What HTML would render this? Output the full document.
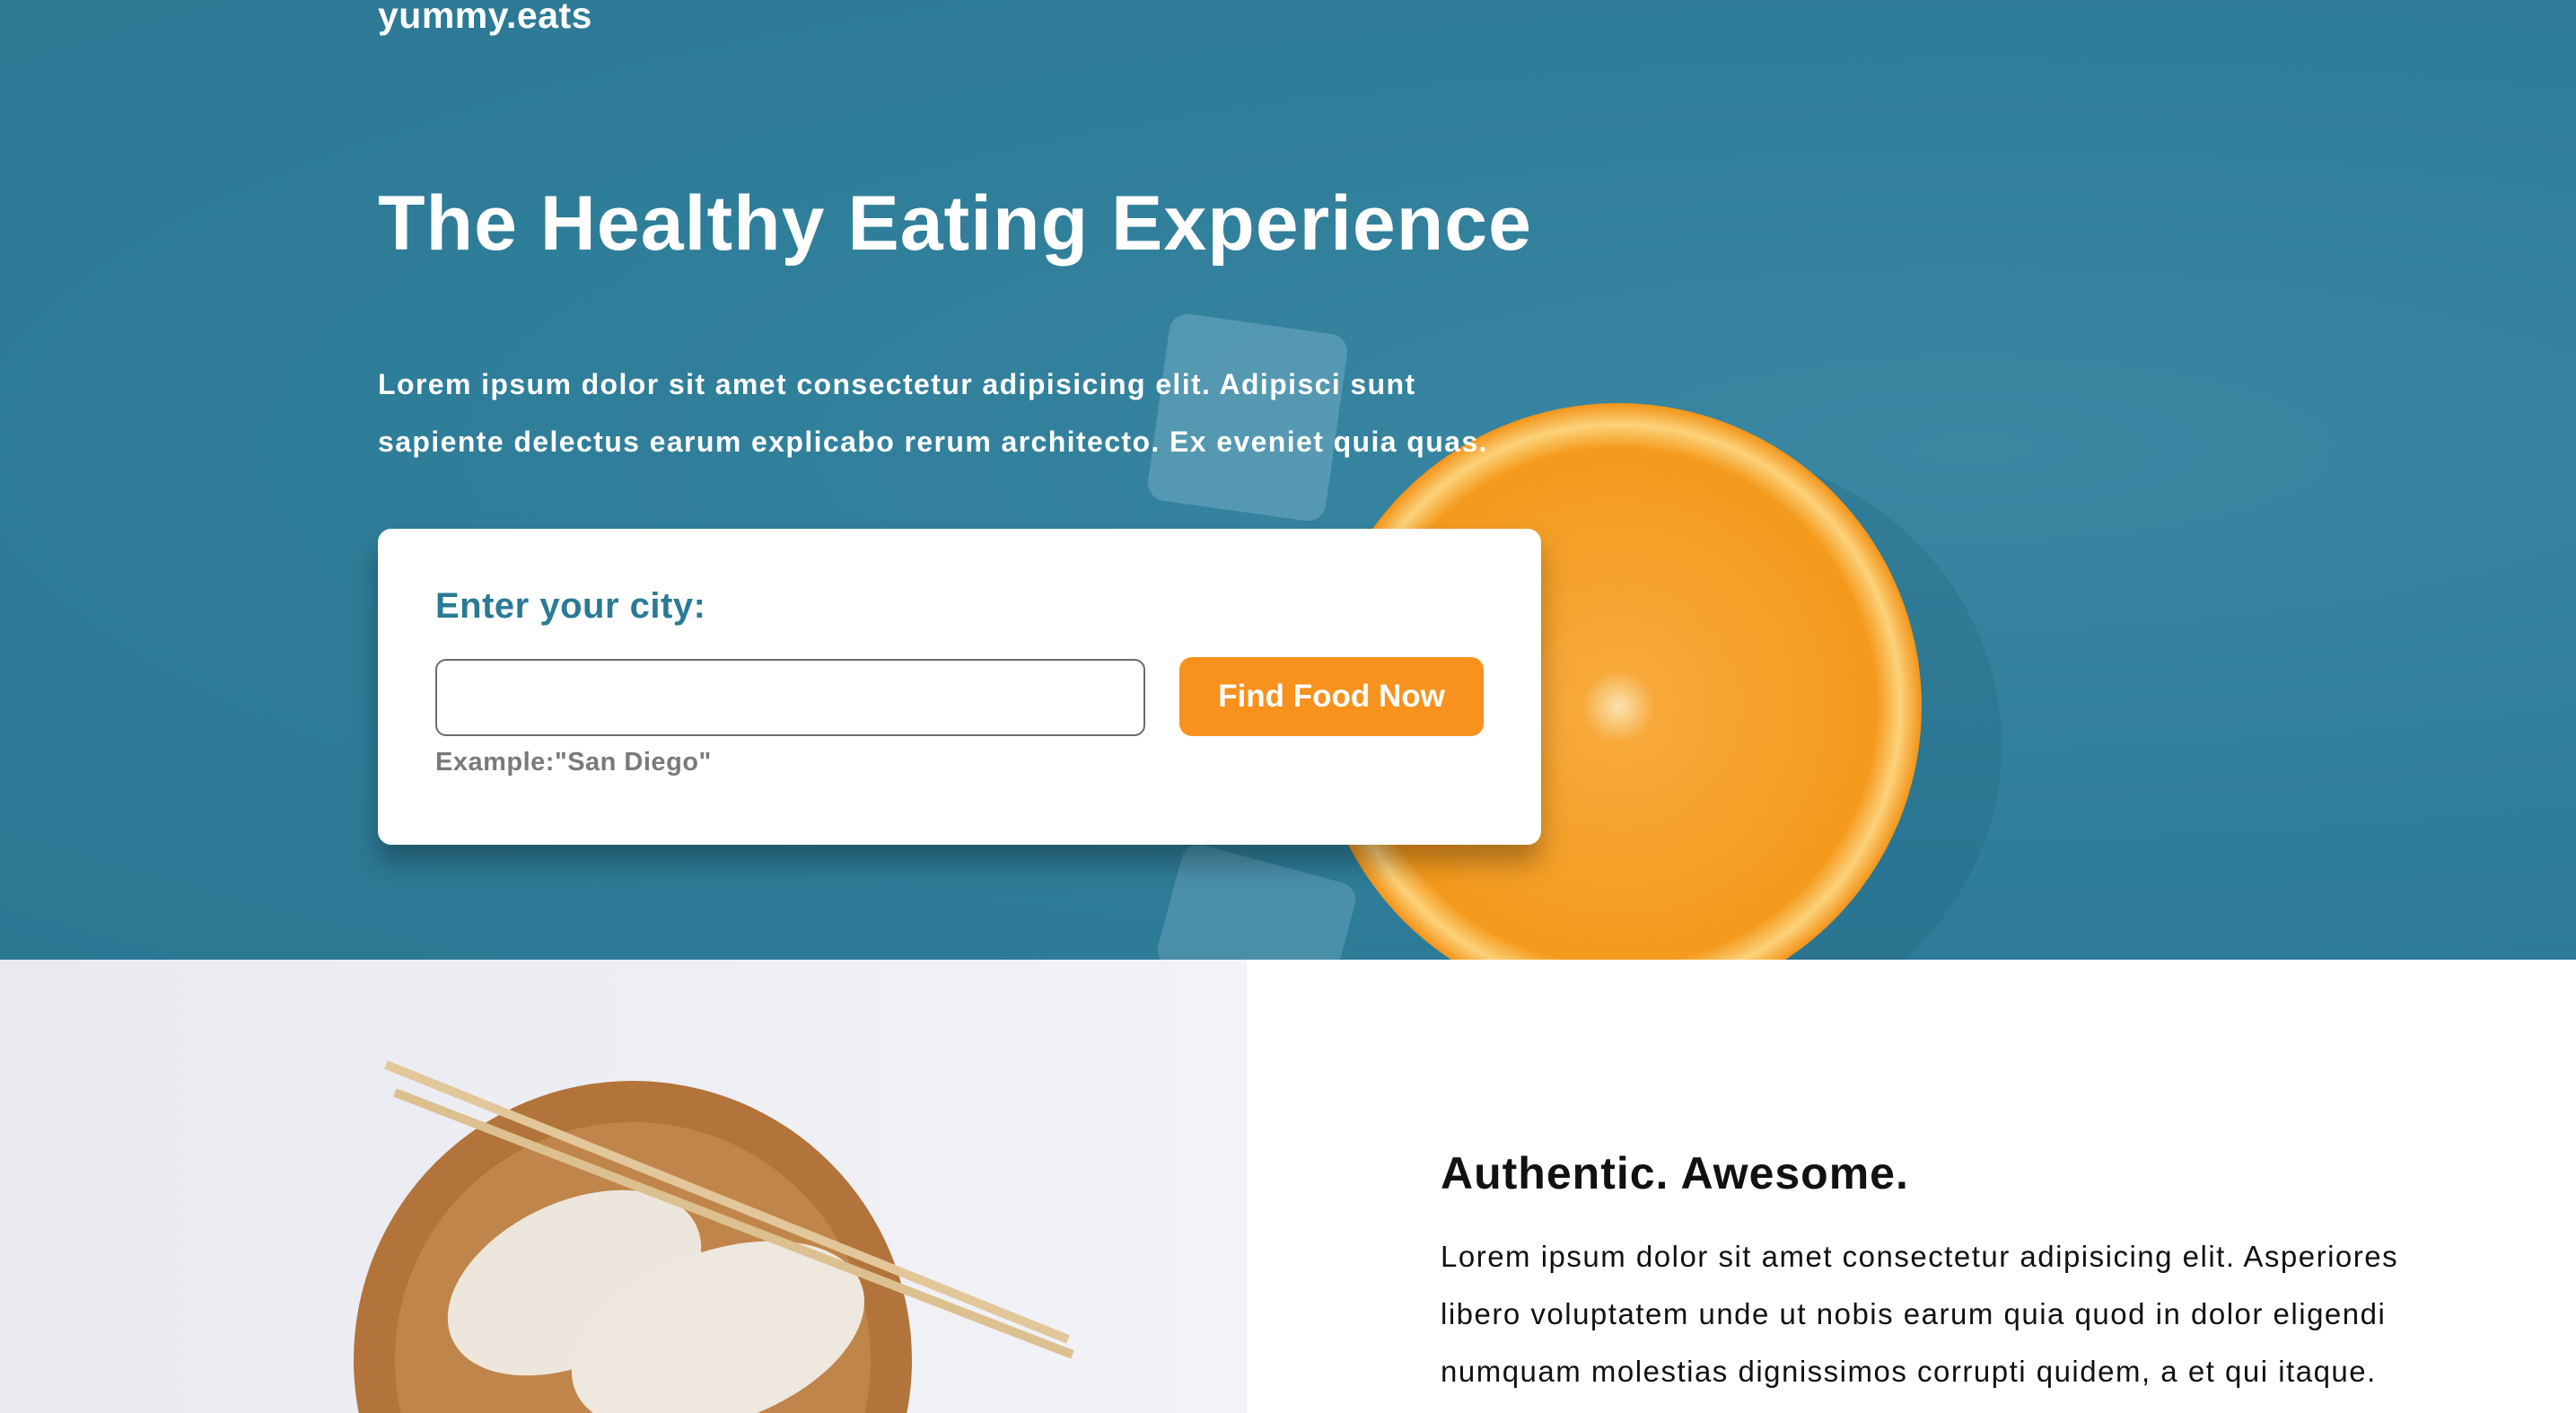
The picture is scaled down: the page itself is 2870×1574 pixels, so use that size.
<!DOCTYPE html>
<html><head><meta charset="utf-8"><style>
*{margin:0;padding:0;box-sizing:border-box}
html,body{width:2870px;height:1574px;overflow:hidden}
body{font-family:"Liberation Sans",sans-serif;background:#fff;position:relative}
.hero{position:absolute;left:0;top:0;width:2870px;height:1069px;background:radial-gradient(ellipse at 2200px 500px,#3a87a2 0%,#2f7e9a 50%,#2b7893 100%);overflow:hidden}
.logo{position:absolute;left:421px;top:-6px;color:#fff;font-weight:bold;font-size:41px;letter-spacing:0.5px}
h1{position:absolute;left:421px;top:200px;color:#fff;font-size:86px;font-weight:bold;white-space:nowrap;letter-spacing:1px}
.lead{position:absolute;left:421px;top:396px;width:1290px;color:#fff;font-weight:bold;font-size:32px;line-height:64px;letter-spacing:1.4px}
.card{position:absolute;left:421px;top:589px;width:1296px;height:352px;background:#fff;border-radius:15px;box-shadow:0 20px 30px rgba(0,0,0,.3)}
.card h3{position:absolute;left:64px;top:64px;color:#2a7a95;font-size:40px;font-weight:bold;letter-spacing:0.5px}
.inp{position:absolute;left:64px;top:145px;width:791px;height:86px;border:2px solid #6b6b6b;border-radius:12px}
.btn{position:absolute;left:893px;top:143px;width:339px;height:88px;background:#f7921e;border-radius:14px;color:#fff;font-weight:bold;font-size:35px;text-align:center;line-height:88px}
.ex{position:absolute;left:64px;top:244px;color:#7a7a7a;font-weight:bold;font-size:29px;letter-spacing:0.5px}
.left{position:absolute;left:0;top:1069px;width:1389px;height:505px;background:linear-gradient(90deg,#e9eaef,#f2f3f7);overflow:hidden}
h2{position:absolute;left:1605px;top:1278px;font-size:50px;font-weight:bold;color:#111;letter-spacing:1px}
.p2{position:absolute;left:1605px;top:1368px;width:1110px;font-size:33px;line-height:64px;color:#111;letter-spacing:1.5px}
</style></head><body>
<div class="hero">
<svg width="2870" height="1069" style="position:absolute;left:0;top:0">
<defs><radialGradient id="og" cx="0.5" cy="0.5" r="0.5"><stop offset="0" stop-color="#fbe3b0"/><stop offset="0.12" stop-color="#f7a93a"/><stop offset="0.85" stop-color="#f49a1c"/><stop offset="0.93" stop-color="#fcd27a"/><stop offset="1" stop-color="#f39419"/></radialGradient></defs>
<ellipse cx="1880" cy="830" rx="350" ry="330" fill="#1f5f7a" opacity=".25"/>
<circle cx="1803" cy="787" r="338" fill="url(#og)"/>
<rect x="1290" y="360" width="200" height="210" rx="20" fill="#9fcde0" opacity=".3" transform="rotate(8 1390 465)"/>
<rect x="1300" y="960" width="200" height="140" rx="20" fill="#9fcde0" opacity=".25" transform="rotate(15 1400 1030)"/>
</svg>
<div class="logo">yummy.eats</div>
<h1>The Healthy Eating Experience</h1>
<div class="lead">Lorem ipsum dolor sit amet consectetur adipisicing elit. Adipisci sunt sapiente delectus earum explicabo rerum architecto. Ex eveniet quia quas.</div>
<div class="card"><h3>Enter your city:</h3><div class="inp"></div><div class="btn">Find Food Now</div><div class="ex">Example:"San Diego"</div></div>
</div>
<div class="left">
<svg width="1389" height="505">
<circle cx="705" cy="446" r="311" fill="#b2743a"/>
<circle cx="705" cy="446" r="265" fill="#c0854a"/>
<ellipse cx="640" cy="360" rx="150" ry="90" fill="#ece6dc" transform="rotate(-25 640 360)"/>
<ellipse cx="800" cy="420" rx="170" ry="95" fill="#eee8de" transform="rotate(-20 800 420)"/>
<line x1="430" y1="117" x2="1190" y2="423" stroke="#e2c79a" stroke-width="10"/>
<line x1="440" y1="148" x2="1195" y2="440" stroke="#dcc090" stroke-width="10"/>
</svg>
</div>
<h2>Authentic. Awesome.</h2>
<div class="p2">Lorem ipsum dolor sit amet consectetur adipisicing elit. Asperiores libero voluptatem unde ut nobis earum quia quod in dolor eligendi numquam molestias dignissimos corrupti quidem, a et qui itaque.</div>
</body></html>
